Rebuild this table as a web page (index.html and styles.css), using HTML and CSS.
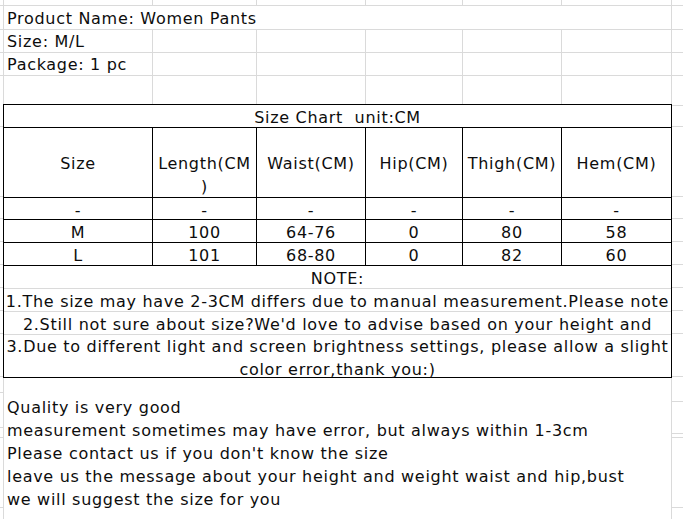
FILE: index.html
```html
<!DOCTYPE html>
<html>
<head>
<meta charset="utf-8">
<link rel="stylesheet" href="styles.css">
</head>
<body>
<div class="sheet">
  <div class="g top">
    <div></div><div></div><div></div><div></div><div></div><div></div><div></div><div class="last"></div>
  </div>
  <div class="g r23">
    <div></div><div class="span6 txt">Product Name: Women Pants</div><div class="last"></div>
  </div>
  <div class="g r23">
    <div></div><div class="txt">Size: M/L</div><div></div><div></div><div></div><div></div><div></div><div class="last"></div>
  </div>
  <div class="g r23">
    <div></div><div class="txt">Package: 1 pc</div><div></div><div></div><div></div><div></div><div></div><div class="last"></div>
  </div>
  <div class="g r29">
    <div></div><div></div><div></div><div></div><div></div><div></div><div></div><div class="last"></div>
  </div>

  <div class="mid">
    <div class="strip">
      <div class="s23"></div><div class="s70"></div><div class="s22"></div><div class="s23"></div><div class="s23"></div><div class="s23"></div><div class="s23"></div><div class="s23"></div><div class="s43"></div>
    </div>
    <div class="tbl">
      <div class="title">Size Chart  unit:CM</div>
      <div class="trow head">
        <div>Size</div>
        <div>Length(CM<br>)</div>
        <div>Waist(CM)</div>
        <div>Hip(CM)</div>
        <div>Thigh(CM)</div>
        <div>Hem(CM)</div>
      </div>
      <div class="trow d22">
        <div>-</div><div>-</div><div>-</div><div>-</div><div>-</div><div>-</div>
      </div>
      <div class="trow d23">
        <div>M</div><div>100</div><div>64-76</div><div>0</div><div>80</div><div>58</div>
      </div>
      <div class="trow d23">
        <div>L</div><div>101</div><div>68-80</div><div>0</div><div>82</div><div>60</div>
      </div>
      <div class="note">NOTE:</div>
      <div class="note">1.The size may have 2-3CM differs due to manual measurement.Please note</div>
      <div class="note">2.Still not sure about size?We'd love to advise based on your height and</div>
      <div class="note last2">3.Due to different light and screen brightness settings, please allow a slight<br>color error,thank you:)</div>
    </div>
    <div class="strip">
      <div class="s2"></div><div class="s21"></div><div class="s70"></div><div class="s22"></div><div class="s23"></div><div class="s23"></div><div class="s23"></div><div class="s23"></div><div class="s23"></div><div class="s43"></div>
    </div>
  </div>

  <div class="bot">
    <div class="strip">
      <div class="b15"></div><div class="b35"></div><div class="b10"></div><div class="b70"></div>
    </div>
    <div class="box">
      <div class="line">Quality is very good</div>
      <div class="line">measurement sometimes may have error, but always within 1-3cm</div>
      <div class="line">Please contact us if you don't know the size</div>
      <div class="line">leave us the message about your height and weight waist and hip,bust</div>
      <div class="line">we will suggest the size for you</div>
    </div>
    <div class="strip">
      <div class="b24"></div><div class="b32"></div><div class="b4"></div><div class="b70"></div>
    </div>
  </div>
</div>
</body>
</html>
```

FILE: styles.css
```css
html, body {
  margin: 0;
  padding: 0;
  background: #ffffff;
}

body {
  font-family: "DejaVu Sans", Verdana, sans-serif;
  font-size: 16px;
  letter-spacing: 0.7px;
  color: #0d0d0d;
}

.sheet {
  width: 683px;
  height: 519px;
  overflow: hidden;
}

.g {
  display: grid;
  grid-template-columns: 4px 149px 104px 109px 97px 99px 110px 11px;
}

.g > div {
  box-sizing: border-box;
  border-right: 1px solid #dadada;
  border-bottom: 1px solid #dadada;
  min-width: 0;
}

.g > .last {
  border-right: none;
}

.top { height: 6px; }
.r23 { height: 23px; }
.r29 { height: 29px; }
.r29 > div { border-bottom: none; }

.span6 { grid-column: span 6; }

.txt {
  padding-left: 3px;
  padding-top: 2px;
  line-height: 21px;
  white-space: nowrap;
}

.mid {
  display: grid;
  grid-template-columns: 3px 669px 11px;
  height: 274px;
}

.strip {
  display: flex;
  flex-direction: column;
}

.strip > div {
  box-sizing: border-box;
  border-bottom: 1px solid #dadada;
  flex: none;
}

.s2 { height: 2px; }
.s21 { height: 21px; }
.s22 { height: 22px; }
.s23 { height: 23px; }
.s43 { height: 43px; }
.s70 { height: 70px; }

.tbl {
  box-sizing: border-box;
  border: 1px solid #000000;
  width: 669px;
  height: 274px;
  display: flex;
  flex-direction: column;
}

.title {
  box-sizing: border-box;
  height: 23px;
  border-bottom: 1px solid #000000;
  text-align: center;
  white-space: pre;
  padding-top: 2px;
  line-height: 21px;
}

.trow {
  display: grid;
  grid-template-columns: 149px 104px 109px 97px 99px 109px;
  box-sizing: border-box;
  border-bottom: 1px solid #000000;
}

.trow > div {
  box-sizing: border-box;
  border-right: 1px solid #000000;
  text-align: center;
  white-space: nowrap;
}

.trow > div:last-child {
  border-right: none;
}

.head { height: 70px; }
.head > div {
  padding-top: 24px;
  line-height: 23px;
}

.d22 { height: 22px; }
.d23 { height: 23px; }
.d22 > div, .d23 > div {
  padding-top: 2px;
  line-height: 21px;
}

.note {
  box-sizing: border-box;
  height: 23px;
  border-bottom: 1px solid #dadada;
  text-align: center;
  white-space: nowrap;
  padding-top: 2px;
  line-height: 21px;
}

.note.last2 {
  height: 42px;
  border-bottom: none;
  padding-top: 0;
  line-height: 23px;
}

.bot {
  display: grid;
  grid-template-columns: 3px 669px 11px;
  height: 141px;
}

.box {
  box-sizing: border-box;
  border-left: 1px solid #dadada;
  border-right: 1px solid #dadada;
  padding: 18px 0 0 3px;
}

.line {
  line-height: 23px;
  white-space: nowrap;
}

.b4 { height: 4px; }
.b10 { height: 10px; }
.b15 { height: 15px; }
.b24 { height: 24px; }
.b32 { height: 32px; }
.b35 { height: 35px; }
.b70 { height: 70px; }
```
